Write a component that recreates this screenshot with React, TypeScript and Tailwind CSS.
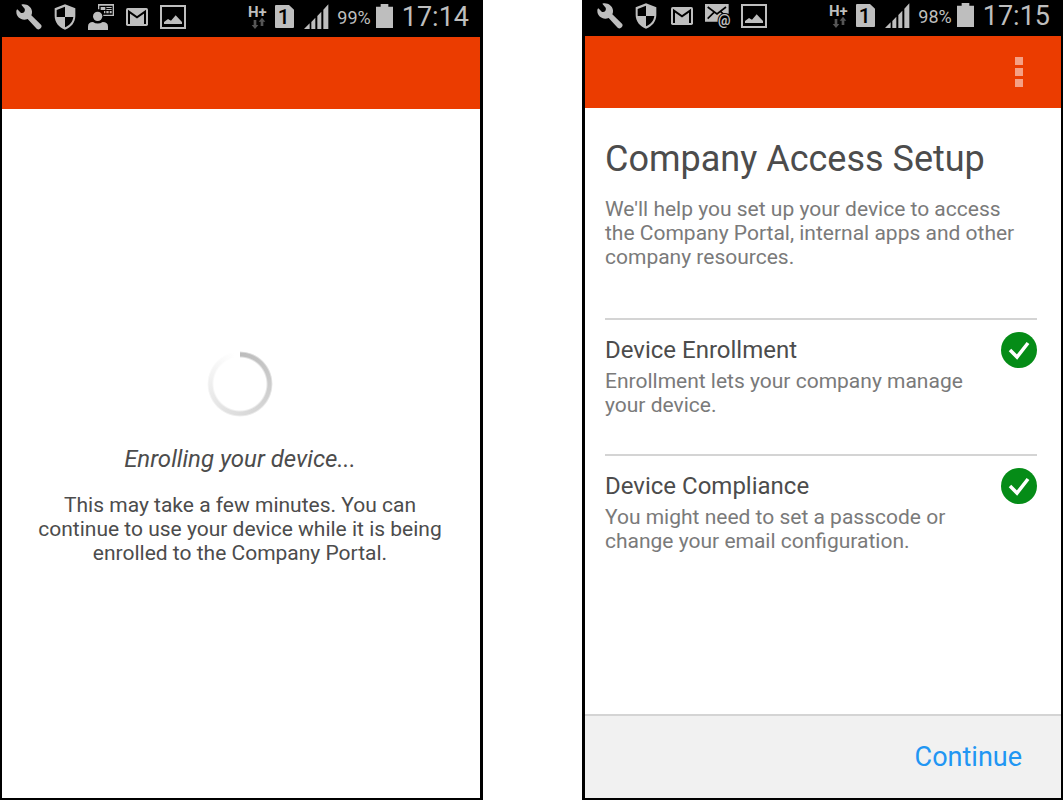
import type { ReactNode } from "react";

const GREY = "#bebebe";

function Glyph({ label, children }: { label: string; children: ReactNode }) {
  return (
    <svg className="size-[26px] shrink-0" viewBox="0 0 78 78" fill={GREY} role="img" aria-label={label}>
      {children}
    </svg>
  );
}

function WrenchIcon() {
  return (
    <Glyph label="Tools">
      <path d="M16 2 C30 -2 46 7 48 22 C48 27 48 30 46 34 L75 62 C78 66 77 70 74 73 C70 77 66 77 62 74 L35 45 C18 52 0 40 1 22 Q1 18 4 16 L15 27 Q22 28 24 25 Q28 20 26 14 Z" />
    </Glyph>
  );
}

function ShieldIcon() {
  return (
    <Glyph label="Security">
      <path d="M39 1 L70 13 V35 C70 55 57 70 39 77 C21 70 8 55 8 35 V13 Z" />
      <path fill="#000" d="M39 8 L14 18 V39 H39 Z M39 39 H64 C62 54 53 64 39 70 Z" />
    </Glyph>
  );
}

function ContactIcon() {
  return (
    <Glyph label="Contact">
      <path d="M30 0 H78 V36 H46 V32 H74 V5 H34 V16 H30 Z" />
      <path d="M38 9 H52 V18 H38 Z M55 9 H71 V12 H55 Z M55 15 H71 V18 H55 Z M55 21 H62 V28 H55 Z M65 21 H71 V28 H65 Z M48 21 H52 V28 H48 Z" />
      <circle cx="29" cy="37" r="14" />
      <path d="M0 78 V68 Q0 54 15 54 Q29 63 44 54 Q60 54 60 68 V78 Z" />
    </Glyph>
  );
}

function MailIcon() {
  return (
    <Glyph label="Mail">
      <rect x="6" y="12" width="66" height="54" rx="5" />
      <path fill="none" stroke="#000" strokeWidth="6" d="M15 60 V23 L39 40 L63 23 V60" />
    </Glyph>
  );
}

function EmailAtIcon() {
  return (
    <Glyph label="Email">
      <path d="M0 3 H71 V32 Q44 28 40 56 H0 Z" />
      <path fill="none" stroke="#000" strokeWidth="5" d="M8 12 L36 33 L63 12 M8 47 L27 28 M47 26 L60 38" />
      <text
        x="58"
        y="65"
        textAnchor="middle"
        fontFamily="Roboto, sans-serif"
        fontSize="42"
        fontWeight="700"
        stroke="#000"
        strokeWidth="6"
        paintOrder="stroke"
      >
        @
      </text>
    </Glyph>
  );
}

function PictureIcon() {
  return (
    <Glyph label="Picture">
      <rect x="3" y="6" width="72" height="66" fill="none" stroke={GREY} strokeWidth="6" />
      <path d="M12 60 V54 L24 45 L33 50 L47 34 L66 54 V60 Z" />
    </Glyph>
  );
}

function DataIcon() {
  return (
    <svg className="h-[26px] w-5 shrink-0" viewBox="0 0 60 78" role="img" aria-label="Mobile data">
      <text x="0" y="38" fill={GREY} fontFamily="Roboto, sans-serif" fontSize="45" fontWeight="700">
        H+
      </text>
      <path fill="#555" d="M17 48 H25 V63 H31 L21 75 L11 63 H17 Z M38 66 H46 V53 H52 L42 41 L32 53 H38 Z" />
    </svg>
  );
}

function SimIcon() {
  return (
    <svg className="h-[26px] w-[19px] shrink-0" viewBox="0 0 57 78" role="img" aria-label="SIM 1">
      <path fill={GREY} d="M3 3 H42 L57 17 V69 Q57 72 54 72 H3 Q0 72 0 69 V6 Q0 3 3 3 Z" />
      <text x="26" y="61" textAnchor="middle" fill="#000" fontFamily="Roboto, sans-serif" fontSize="63" fontWeight="500">
        1
      </text>
    </svg>
  );
}

function SignalIcon() {
  return (
    <svg className="h-[26px] w-[25px] shrink-0" viewBox="0 0 75 78" role="img" aria-label="Signal">
      <path fill={GREY} d="M0 75 L17 58 V75 Z M22 54 L34 41 V75 H22 Z M40 36 L52 23 V75 H40 Z M58 17 L73 1 V75 H58 Z" />
    </svg>
  );
}

function BatteryIcon() {
  return (
    <svg className="h-[26px] w-[17px] shrink-0" viewBox="0 0 51 78" role="img" aria-label="Battery">
      <path fill={GREY} d="M14 0 H37 V8 H51 V72 H0 V8 H14 Z" />
    </svg>
  );
}

function StatusBar({
  className,
  battery,
  time,
  children,
}: {
  className: string;
  battery: string;
  time: string;
  children: ReactNode;
}) {
  return (
    <div className={`flex items-center justify-between bg-black text-[#bebebe] ${className}`}>
      <div className="flex items-center gap-2.5">{children}</div>
      <div className="flex items-center">
        <DataIcon />
        <span className="ml-[7px] flex items-center gap-2.5">
          <SimIcon />
          <SignalIcon />
        </span>
        <span className="mr-[5px] ml-2 pt-0.5 text-lg leading-6">{battery}</span>
        <BatteryIcon />
        <span className="ml-[9px] text-[27px] leading-6">{time}</span>
      </div>
    </div>
  );
}

function SetupItem({ title, children }: { title: string; children: ReactNode }) {
  return (
    <li className="flex items-start justify-between gap-6 border-t-2 border-[#d4d4d4] pt-3 pb-[37px]">
      <div>
        <h2 className="text-2xl leading-9 text-[#4c4c4c]">{title}</h2>
        <p className="mt-px text-[21px] leading-6">{children}</p>
      </div>
      <svg className="size-9 shrink-0" viewBox="0 0 36 36" role="img" aria-label="Done">
        <circle cx="18" cy="18" r="18" fill="#058c17" />
        <path d="M9 18 L16 25 L27 11" fill="none" stroke="#fff" strokeWidth="3.5" />
      </svg>
    </li>
  );
}

export default function App() {
  return (
    <div className="grid min-h-screen grid-cols-[483fr_481fr] gap-[99px] bg-white font-[Roboto,sans-serif]">
      <section className="flex flex-col border-r-[3px] border-b-2 border-l-2 border-black">
        <StatusBar className="h-[37px] pr-[11px] pb-[3px] pl-3.5" battery="99%" time="17:14">
          <WrenchIcon />
          <ShieldIcon />
          <ContactIcon />
          <MailIcon />
          <PictureIcon />
        </StatusBar>
        <header className="h-[72px] bg-[#eb3c00]" />
        <main className="flex flex-col items-center pt-[242px] pr-[34px] pl-8 text-center text-[#4c4c4c]">
          <div
            role="status"
            aria-label="Loading"
            className="size-[66px] rounded-full bg-[conic-gradient(#bcbcbc,#dcdcdc_50%,#ffffff_97%)] [mask:radial-gradient(circle,transparent_26px,black_28px,black_31px,transparent_33px)]"
          />
          <p className="mt-6 text-2xl leading-9 italic">Enrolling your device...</p>
          <p className="mt-4 text-[21px] leading-6">
            This may take a few minutes. You can continue to use your device while it is being enrolled to the Company
            Portal.
          </p>
        </main>
      </section>

      <section className="flex flex-col border-r-2 border-b-2 border-l-[3px] border-black">
        <StatusBar className="h-9 pr-[11px] pb-1 pl-3" battery="98%" time="17:15">
          <WrenchIcon />
          <ShieldIcon />
          <MailIcon />
          <EmailAtIcon />
          <PictureIcon />
        </StatusBar>
        <header className="flex h-[72px] items-center justify-end bg-[#eb3c00] pr-[30px]">
          <button type="button" aria-label="More options" className="flex flex-col gap-[3px] px-2 py-3">
            <span className="size-2 bg-[#f5a084]" />
            <span className="size-2 bg-[#f5a084]" />
            <span className="size-2 bg-[#f5a084]" />
          </button>
        </header>
        <main className="flex-1 pt-[30px] pr-6 pl-5 text-[#7a7a7a]">
          <h1 className="text-4xl leading-[42px] text-[#4c4c4c]">Company Access Setup</h1>
          <p className="mt-[17px] pr-3 text-[21px] leading-6">
            We'll help you set up your device to access the Company Portal, internal apps and other company resources.
          </p>
          <ul className="mt-[49px]">
            <SetupItem title="Device Enrollment">Enrollment lets your company manage your device.</SetupItem>
            <SetupItem title="Device Compliance">
              You might need to set a passcode or change your email configuration.
            </SetupItem>
          </ul>
        </main>
        <footer className="flex h-[84px] items-center justify-end border-t-2 border-[#d4d4d4] bg-[#f1f1f1] pr-[39px]">
          <button type="button" className="text-[27px] leading-9 text-[#2196f3]">
            Continue
          </button>
        </footer>
      </section>
    </div>
  );
}
